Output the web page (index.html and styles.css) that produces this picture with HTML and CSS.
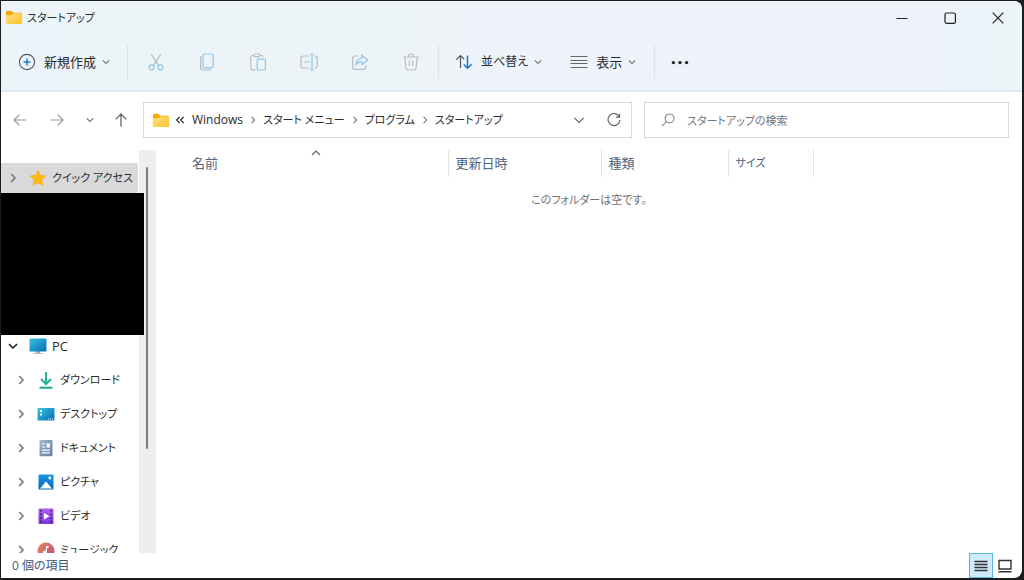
FILE: index.html
```html
<!DOCTYPE html>
<html lang="ja">
<head>
<meta charset="utf-8">
<title>スタートアップ</title>
<link rel="stylesheet" href="styles.css">
</head>
<body>
<svg class="defs" aria-hidden="true">
  <defs>
    <linearGradient id="g-folder" x1="0" y1="0" x2="1" y2="1"><stop offset="0" stop-color="#ffe185"/><stop offset="1" stop-color="#fcc32c"/></linearGradient>
    <linearGradient id="g-screen" x1="0" y1="0" x2="1" y2="1"><stop offset="0" stop-color="#35c8df"/><stop offset="1" stop-color="#0868b4"/></linearGradient>
    <linearGradient id="g-doc" x1="0" y1="0" x2="1" y2="1"><stop offset="0" stop-color="#a9bad0"/><stop offset="1" stop-color="#617b9d"/></linearGradient>
    <linearGradient id="g-pic" x1="0" y1="0" x2="0" y2="1"><stop offset="0" stop-color="#1a98e6"/><stop offset="1" stop-color="#0566b4"/></linearGradient>
    <linearGradient id="g-video" x1="0" y1="0" x2="0" y2="1"><stop offset="0" stop-color="#ae60f0"/><stop offset="1" stop-color="#7c35d6"/></linearGradient>
    <linearGradient id="g-music" x1="0" y1="0" x2="1" y2="1"><stop offset="0" stop-color="#ee8a5c"/><stop offset="1" stop-color="#b24a86"/></linearGradient>
    <symbol id="folder" viewBox="0 0 18 15"><path d="M1 2.2Q1 .8 2.4.8H6.4L8.4 2.8H15.6Q17 2.8 17 4.2V8H1Z" fill="#f3a80c"/><path d="M1 5.2H6.6L8.6 3.6H16Q17.2 3.6 17.2 4.8V12.8Q17.2 14 16 14H2Q.8 14 .8 12.8V5.2Z" fill="url(#g-folder)"/></symbol>
    <symbol id="chev-down" viewBox="0 0 10 10"><path d="M1.8 3.3 5 6.5 8.2 3.3"/></symbol>
    <symbol id="chev-right" viewBox="0 0 10 10"><path d="M3.2 1 7 5 3.2 9"/></symbol>
  </defs>
</svg>

<main class="window">
  <header class="chrome">
    <div class="titlebar">
      <svg class="folder"><use href="#folder"/></svg>
      <h1 class="title kana">スタートアップ</h1>
      <div class="caption-buttons">
        <button aria-label="最小化"><svg viewBox="0 0 14 14"><path d="M1.5 7.5H12.5"/></svg></button>
        <button aria-label="最大化"><svg viewBox="0 0 14 14"><rect x="2" y="2" width="10.4" height="10.4" rx="1.6"/></svg></button>
        <button aria-label="閉じる"><svg viewBox="0 0 14 14"><path d="M1.7 1.7 12.3 12.3M12.3 1.7 1.7 12.3"/></svg></button>
      </div>
    </div>
    <div class="toolbar">
      <button class="command new">
        <svg class="icon" viewBox="0 0 18 18"><circle cx="9" cy="9" r="7.6" stroke="#555b60"/><path d="M9 5.5V12.5M5.5 9H12.5" stroke="#1479cf" stroke-width="1.4"/></svg>
        <span>新規作成</span><svg class="chev"><use href="#chev-down"/></svg>
      </button>
      <div class="tools">
        <button disabled aria-label="切り取り"><svg class="icon" viewBox="0 0 18 18"><path d="M4.2 1.2 11.6 12.3M13.8 1.2 6.4 12.3" stroke="#b8bcc0"/><circle cx="4.6" cy="14.3" r="2.5" stroke="#8dc5ee"/><circle cx="13.4" cy="14.3" r="2.5" stroke="#8dc5ee"/></svg></button>
        <button disabled aria-label="コピー"><svg class="icon" viewBox="0 0 18 18"><path d="M3.8 3.4Q2.6 3.8 2.6 5V14Q2.6 17 5.6 17H10.4Q12 17 12.6 15.9" stroke="#b8bcc0"/><rect x="5" y="1" width="10.2" height="13.8" rx="1.8" stroke="#8dc5ee"/></svg></button>
        <button disabled aria-label="貼り付け"><svg class="icon" viewBox="0 0 18 18"><path d="M5 2.5H3.3Q1.8 2.5 1.8 4V15.2Q1.8 16.8 3.3 16.8H6.5M11 2.5H12.6Q14.2 2.5 14.2 4M5 2.5Q5 1 6.4 1H9.6Q11 1 11 2.5 11 3.7 9.6 3.7H6.4Q5 3.7 5 2.5Z" stroke="#b8bcc0"/><rect x="8.2" y="6.2" width="8.2" height="10.8" rx="1.4" stroke="#8dc5ee"/></svg></button>
        <button disabled aria-label="名前の変更"><svg class="icon" viewBox="0 0 18 18"><path d="M9.6 3H3.2Q1 3 1 5.2V12.8Q1 15 3.2 15H9.6M14.5 3H15Q17.2 3 17.2 5.2V12.8Q17.2 15 15 15H14.5" stroke="#b8bcc0"/><path d="M4.3 9H9.3M12 1V17M10 1H14M10 17H14" stroke="#8dc5ee"/></svg></button>
        <button disabled aria-label="共有"><svg class="icon" viewBox="0 0 18 18"><path d="M7 3H4Q1.7 3 1.7 5.3V14Q1.7 16.3 4 16.3H12.5Q14.8 16.3 14.8 14V12.5" stroke="#b8bcc0"/><path d="M11 2 16.7 7 11 11.8V9Q7 8.6 5 11.8 5.3 5.8 11 5Z" stroke="#8dc5ee"/></svg></button>
        <button disabled aria-label="削除"><svg class="icon" viewBox="0 0 18 18"><path d="M1.2 4H16.8M6.5 4Q6.5 1 9 1T11.5 4M2.8 4 4 15.2Q4.2 17 6 17H12Q13.8 17 14 15.2L15.2 4M7.3 7.5V13M10.7 7.5V13" stroke="#b8bcc0"/></svg></button>
      </div>
      <button class="command sorting">
        <svg class="icon" viewBox="0 0 18 18"><path d="M5.5 15V2.7M1.3 6.7 5.5 2.5 9.2 6.2" stroke="#50565c"/><path d="M12.5 2.5V15M8.8 11.5 12.5 15.3 16.7 11.2" stroke="#1479cf" stroke-width="1.5"/></svg>
        <span>並べ替え</span><svg class="chev"><use href="#chev-down"/></svg>
      </button>
      <button class="command view">
        <svg class="icon" viewBox="0 0 18 18"><path d="M.5 3.5H17.5M.5 7.5H17.5M.5 10.5H17.5M.5 14.5H17.5" stroke="#62676b"/></svg>
        <span>表示</span><svg class="chev"><use href="#chev-down"/></svg>
      </button>
      <button class="more" aria-label="もっと見る"><svg class="icon" viewBox="0 0 18 18"><g fill="#222" stroke="none"><circle cx="2.4" cy="9.6" r="1.7"/><circle cx="9" cy="9.6" r="1.7"/><circle cx="15.6" cy="9.6" r="1.7"/></g></svg></button>
    </div>
  </header>

  <nav class="location">
    <div class="history">
      <button disabled aria-label="戻る"><svg viewBox="0 0 14 14"><path d="M13.5 7H1M6.3 1.7 1 7 6.3 12.3"/></svg></button>
      <button disabled aria-label="進む"><svg viewBox="0 0 14 14"><path d="M.5 7H13M7.7 1.7 13 7 7.7 12.3"/></svg></button>
      <button class="recent" aria-label="最近表示した場所"><svg class="chev"><use href="#chev-down"/></svg></button>
      <button class="up" aria-label="上へ"><svg viewBox="0 0 14 14"><path d="M7 13.5V1M1.7 6.3 7 1 12.3 6.3"/></svg></button>
    </div>
    <div class="address">
      <svg class="folder"><use href="#folder"/></svg>
      <svg class="laquo" viewBox="0 0 10 10"><path d="M4.6 2 1.6 5 4.6 8M8.6 2 5.6 5 8.6 8"/></svg>
      <a class="latin" href="#">Windows</a><svg class="sep"><use href="#chev-right"/></svg>
      <a class="kana" href="#">スタート メニュー</a><svg class="sep"><use href="#chev-right"/></svg>
      <a class="kana" href="#">プログラム</a><svg class="sep"><use href="#chev-right"/></svg>
      <a class="kana" href="#">スタートアップ</a>
      <button class="drop" aria-label="以前の場所"><svg viewBox="0 0 14 14"><path d="M2.3 4.8 7 9.5 11.7 4.8"/></svg></button>
      <button aria-label="更新"><svg viewBox="0 0 14 14"><path d="M12.2 3.5A6 6 0 1 0 13 7M12.6.7V4.2H9"/></svg></button>
    </div>
    <label class="search">
      <svg viewBox="0 0 14 14"><circle cx="8.6" cy="5.4" r="4.4"/><path d="M5.4 8.6.8 13.2"/></svg>
      <input class="kana" type="search" aria-label="検索" placeholder="スタートアップの検索">
    </label>
  </nav>

  <div class="content">
    <aside class="sidebar">
      <div class="scrollbar"><div class="thumb"></div></div>
      <ul class="tree">
        <li class="item selected"><svg class="exp"><use href="#chev-right"/></svg><svg class="icon" viewBox="0 0 18 18"><path d="M9 1 11.3 6.4 17 6.9 12.7 10.8 14 16.6 9 13.6 4 16.6 5.3 10.8 1 6.9 6.7 6.4Z" fill="#fdb90d" stroke="#f6a80b" stroke-width=".6" stroke-linejoin="round"/></svg><a class="kana" href="#">クイック アクセス</a></li>
        <li class="redacted"></li>
        <li class="item"><svg class="exp open"><use href="#chev-right"/></svg><svg class="icon" viewBox="0 0 18 18"><path d="M7 14H11V16H13.5V17H4.5V16H7Z" fill="#a9b6c0"/><rect x=".5" y="1.5" width="17" height="13" rx="1" fill="url(#g-screen)"/></svg><a href="#">PC</a></li>
        <li class="item child"><svg class="exp"><use href="#chev-right"/></svg><svg class="icon" viewBox="0 0 18 18"><path d="M9 1V12M4 8 9 13 14 8" fill="none" stroke="#1bb590" stroke-width="2"/><path d="M2.5 16.7H15.5" stroke="#16a98f" stroke-width="2"/></svg><a class="kana" href="#">ダウンロード</a></li>
        <li class="item child"><svg class="exp"><use href="#chev-right"/></svg><svg class="icon" viewBox="0 0 18 18"><rect x=".5" y="3" width="17" height="12.5" rx="1" fill="url(#g-screen)"/><path d="M3 5H5V7H3ZM3 8.5H5V10.5H3ZM11 13.5H12.2V14.5H11ZM13 13.5H14.2V14.5H13ZM15 13.5H16.2V14.5H15Z" fill="#e4faff"/></svg><a class="kana" href="#">デスクトップ</a></li>
        <li class="item child"><svg class="exp"><use href="#chev-right"/></svg><svg class="icon" viewBox="0 0 18 18"><rect x="2.5" y="1" width="13" height="16.3" rx="1.2" fill="url(#g-doc)"/><path d="M5 5H8.5M5 8H8.5M5 11.2H13M5 13.8H13" stroke="#fff" stroke-width="1.2"/><path d="M9.7 4.4H13V8.6H9.7Z" fill="#fff"/></svg><a class="kana" href="#">ドキュメント</a></li>
        <li class="item child"><svg class="exp"><use href="#chev-right"/></svg><svg class="icon" viewBox="0 0 18 18"><rect x="1.5" y="1.5" width="15" height="15" rx="1" fill="url(#g-pic)"/><path d="M3 15.5 9 8.5 15 15.5Z" fill="#fff"/><circle cx="12.8" cy="5" r="1.4" fill="#fff"/></svg><a class="kana" href="#">ピクチャ</a></li>
        <li class="item child"><svg class="exp"><use href="#chev-right"/></svg><svg class="icon" viewBox="0 0 18 18"><rect x="1.5" y="1.5" width="15" height="15.5" rx="1" fill="url(#g-video)"/><path d="M3.8 3V16M14.2 3V16" stroke="#421a85" stroke-width="1.6" stroke-dasharray="1.6 2"/><path d="M6.8 5.7 12.5 9.2 6.8 12.7Z" fill="#fff"/></svg><a class="kana" href="#">ビデオ</a></li>
        <li class="item child"><svg class="exp"><use href="#chev-right"/></svg><svg class="icon" viewBox="0 0 18 18"><circle cx="9" cy="10" r="8.5" fill="url(#g-music)"/><path d="M9 5H11.5V7H10V11.5H8.8Z" fill="#fff"/><circle cx="8" cy="11.5" r="2" fill="#fff"/></svg><a class="kana" href="#">ミュージック</a></li>
      </ul>
    </aside>
    <table class="files">
      <colgroup><col class="c-name"><col class="c-date"><col class="c-type"><col class="c-size"><col></colgroup>
      <thead><tr><th class="first">名前<svg class="sort" viewBox="0 0 10 6"><path d="M1 5 5 1 9 5"/></svg></th><th>更新日時</th><th>種類</th><th class="kana">サイズ</th><td></td></tr></thead>
      <tbody><tr><td class="empty kana" colspan="5">このフォルダーは空です。</td></tr></tbody>
    </table>
  </div>

  <footer class="status">
    <span>0 個の項目</span>
    <div class="modes">
      <button class="on" aria-label="詳細表示"><svg viewBox="0 0 14 14"><path d="M.5 2.5H13.5M.5 5.5H13.5M.5 8.5H13.5M.5 11.5H13.5"/></svg></button>
      <button aria-label="大アイコン"><svg viewBox="0 0 14 14"><path d="M1 1.5H13V10H1ZM.5 12.8H13.5"/></svg></button>
    </div>
  </footer>
</main>
</body>
</html>
```
FILE: styles.css
```css
* { box-sizing: border-box; }
body {
  margin: 0;
  padding: 1px 2px 2px 1px;
  height: 100vh;
  background: #1c1c1c;
  color: #2b2b2b;
  font: 13px/20px "Open Sans", "Noto Sans CJK JP", sans-serif;
  font-feature-settings: "palt";
}
button {
  display: flex;
  align-items: center;
  justify-content: center;
  padding: 0;
  border: 0;
  background: none;
  color: inherit;
  font: inherit;
  font-feature-settings: inherit;
}
a { color: inherit; text-decoration: none; white-space: nowrap; }
svg { flex: none; fill: none; stroke: currentColor; stroke-width: 1.2; }
.defs { position: absolute; width: 0; height: 0; }
.kana { font-size: 11px; }
.latin { font-size: 12px; }
.icon { width: 18px; height: 18px; }
.chev { width: 10px; height: 10px; color: #777; }
.folder { width: 18px; height: 15px; stroke: none; }

.window {
  display: flex;
  flex-direction: column;
  height: 100%;
  background: #fff;
  border-radius: 0 8px 8px 0;
  overflow: hidden;
}
.chrome {
  border-bottom: 2px solid #dfe8ec;
  background: linear-gradient(90deg, #ebf4f8, #edf4f8 40%, #eef3fa 60%, #eef3fa 85%, #ebf4f8);
}
.titlebar { display: flex; align-items: center; height: 33px; padding-left: 4px; }
.title { flex: 1; margin: 0 0 0 4px; font-weight: 400; }
.caption-buttons { display: flex; }
.caption-buttons button { width: 48px; height: 33px; color: #222; }
.caption-buttons svg { width: 14px; height: 14px; }

.toolbar { display: flex; align-items: center; height: 56px; padding-left: 17px; }
.command { gap: 8px; }
.command .chev { margin-left: -3px; }
.command.new { margin-right: 16px; }
.command.sorting { margin-right: 27px; font-size: 12px; }
.command.view { margin-right: 17px; }
.tools {
  display: flex;
  height: 34px;
  margin-right: 16px;
  padding: 0 2px;
  border: solid #dce3e8;
  border-width: 0 1px;
}
.tools button { width: 51px; }
.more { height: 34px; padding-left: 16px; border-left: 1px solid #dce3e8; }

.location { display: flex; align-items: center; padding: 10px 13px 12px 12px; }
.history { display: flex; align-items: center; width: 130px; }
.history button { width: 14px; height: 34px; margin-right: 23px; color: #999; }
.history .recent { width: 10px; margin: 0 19px 0 -2px; }
.history .up { margin: 0; color: #555; }
.address, .search { display: flex; align-items: center; height: 36px; border: 1px solid #d9d9d9; }
.address { flex: 491; min-width: 0; padding: 0 10px 0 8px; }
.laquo { width: 10px; height: 10px; margin: 0 7px 0 5px; }
.sep { width: 8px; height: 8px; margin: 0 6px; }
.address button { width: 14px; height: 34px; color: #666; }
.address .drop { margin: 0 21px 0 auto; }
.search { flex: 363; min-width: 0; margin-left: 12px; padding-left: 16px; color: #8d8a96; }
.search svg, .history button svg:not(.chev), .address button svg { width: 14px; height: 14px; }
.search input {
  flex: 1;
  min-width: 0;
  margin-left: 12px;
  padding: 0;
  border: 0;
  outline: 0;
  background: none;
  font-family: inherit;
  font-feature-settings: inherit;
}
.search input::placeholder { color: #70757a; }

.content { display: flex; flex: 1; min-height: 0; }
.sidebar { position: relative; flex: none; width: 155px; padding-top: 13px; overflow: hidden; }
.scrollbar { position: absolute; top: 0; right: 0; bottom: 0; width: 17px; padding: 17px 8px 0 7px; background: #eee; }
.thumb { height: 73%; border-radius: 1px; background: #7b7b7b; }
.tree { position: relative; margin: 0; padding: 0; list-style: none; }
.item { display: flex; align-items: center; height: 34px; margin-right: 18px; padding-left: 7px; }
.item svg.icon { margin: 0 5px 0 11px; stroke: none; }
.child { padding-left: 15px; }
.exp { width: 10px; height: 10px; color: #777; stroke-width: 1.6; }
.exp.open { transform: rotate(90deg); color: #222; }
.selected { height: 30px; border-radius: 0 2px 2px 0; background: #d9d9d9; }
.redacted { position: relative; width: 143px; height: 142px; margin: 0 0 -6px; background: #000; }

.files { flex: 1; align-self: flex-start; width: 100%; table-layout: fixed; border-collapse: collapse; }
.c-name { width: 292px; }
.c-date { width: 153px; }
.c-type { width: 127px; }
.c-size { width: 85px; }
.files th {
  position: relative;
  height: 27px;
  padding: 0 0 2px 7px;
  border-right: 1px solid #e3e3e3;
  color: #4f6480;
  font-weight: 400;
  text-align: left;
}
.files .first { padding-left: 36px; }
.sort { position: absolute; top: 0; left: 155px; width: 10px; height: 6px; color: #666; }
.empty { padding: 13px 0; color: #707070; text-align: center; }

.status { display: flex; align-items: center; height: 25px; padding: 0 5px 0 11px; color: #40587a; font-size: 12px; }
.modes { display: flex; margin-left: auto; }
.modes button { width: 24px; height: 25px; color: #333; }
.modes svg { width: 14px; height: 14px; stroke-width: 1.4; }
.modes .on { border: 1px solid #58b5e0; background: #cfeaf8; }
```
